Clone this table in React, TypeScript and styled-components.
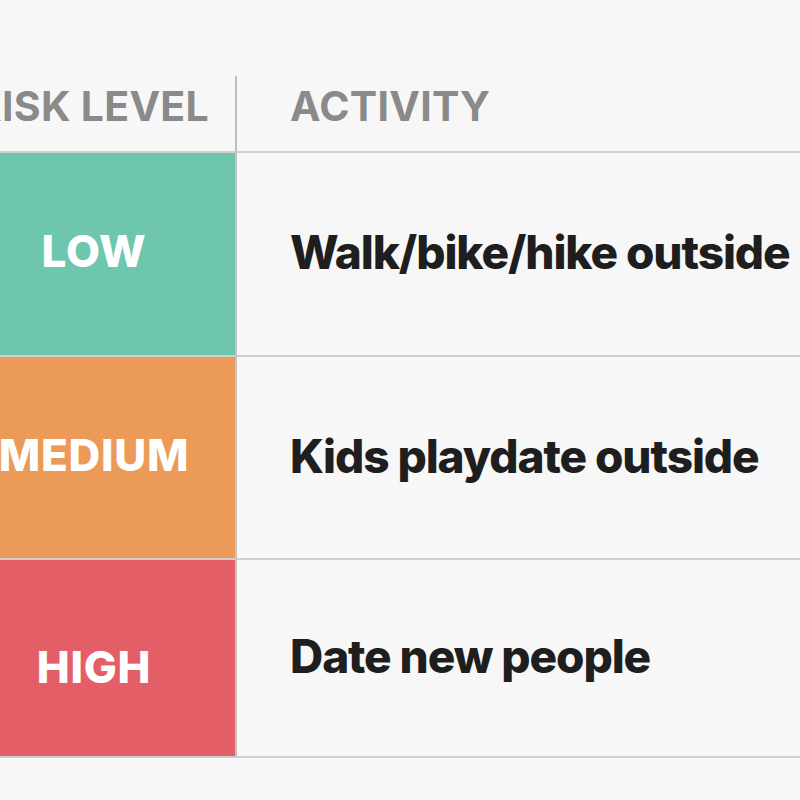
import React from 'react'
import styled, { createGlobalStyle } from 'styled-components'

const GlobalStyle = createGlobalStyle`
  html, body {
    margin: 0;
    padding: 0;
    background: #f7f7f7;
    overflow: hidden;
  }
  body {
    font-family: Inter, "Liberation Sans", sans-serif;
  }
`

const Page = styled.div`
  width: 800px;
  height: 800px;
  padding-top: 76px;
  box-sizing: border-box;
  overflow: hidden;
`

const Table = styled.div`
  display: grid;
  grid-template-columns: 284px 1fr;
  margin-left: -47px;
  width: 847px;
`

const HeadCell = styled.div<{ $divider?: boolean }>`
  height: 59px;
  display: flex;
  align-items: center;
  justify-content: ${p => (p.$divider ? 'flex-end' : 'flex-start')};
  padding: ${p => (p.$divider ? '0 26px 16px 0' : '0 0 16px 53px')};
  border-right: ${p => (p.$divider ? '2px solid #bdbdbd' : 'none')};
  border-bottom: 2px solid #cfcfcf;
  color: #8a8a8a;
  font-size: 41px;
  font-weight: 700;
  letter-spacing: 0.3px;
  white-space: nowrap;
`

const LevelCell = styled.div<{ $bg: string; $h: number; $shift: number }>`
  height: ${p => p.$h}px;
  background: ${p => p.$bg};
  border-right: 2px solid #c4c4c4;
  border-bottom: 2px solid #cfcfcf;
  display: flex;
  align-items: center;
  justify-content: center;
  padding-top: ${p => p.$shift}px;
  padding-bottom: 6px;
  box-sizing: border-box;
  color: #ffffff;
  font-size: 44px;
  font-weight: 800;
  letter-spacing: 0.7px;
  white-space: nowrap;
`

const ActivityCell = styled.div<{ $h: number }>`
  height: ${p => p.$h}px;
  border-bottom: 2px solid #cfcfcf;
  display: flex;
  align-items: center;
  padding-left: 53px;
  padding-bottom: 4px;
  box-sizing: border-box;
  color: #1e1e1e;
  font-size: 46px;
  font-weight: 800;
  letter-spacing: -1.1px;
  white-space: nowrap;
`

const rows = [
  { level: 'LOW', color: '#6dc6ad', activity: 'Walk/bike/hike outside', h: 204, shift: 0 },
  { level: 'MEDIUM', color: '#ec9a58', activity: 'Kids playdate outside', h: 203, shift: 0 },
  { level: 'HIGH', color: '#e45e67', activity: 'Date new people', h: 198, shift: 24 },
]

export default function App() {
  return (
    <>
      <GlobalStyle />
      <Page>
        <Table>
          <HeadCell $divider>RISK LEVEL</HeadCell>
          <HeadCell>ACTIVITY</HeadCell>
          {rows.map(r => (
            <React.Fragment key={r.level}>
              <LevelCell $bg={r.color} $h={r.h} $shift={r.shift}>{r.level}</LevelCell>
              <ActivityCell $h={r.h}>{r.activity}</ActivityCell>
            </React.Fragment>
          ))}
        </Table>
      </Page>
    </>
  )
}
